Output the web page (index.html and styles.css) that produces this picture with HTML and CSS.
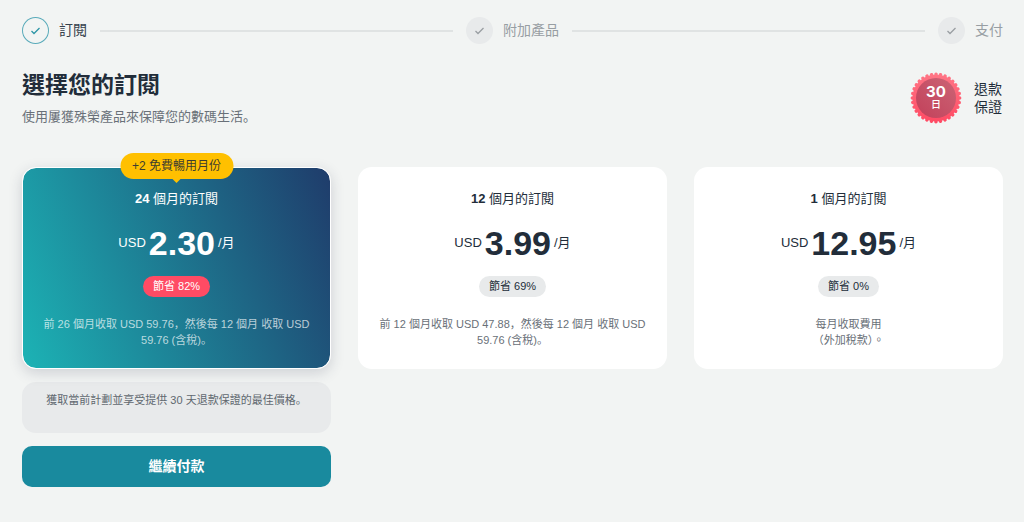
FILE: index.html
```html
<!DOCTYPE html>
<html lang="zh-Hant">
<head>
<meta charset="utf-8">
<meta name="viewport" content="width=device-width, initial-scale=1">
<title>選擇您的訂閱</title>
<link rel="stylesheet" href="styles.css">
</head>
<body>
<main class="page">
  <ol class="steps">
    <li class="step step-current">
      <span class="step-icon"><svg viewBox="0 0 27 27" aria-hidden="true"><path d="M9.5 14l2.5 2.5 5.5-5.5"/></svg></span>
      <span>訂閱</span>
    </li>
    <li class="step-line" aria-hidden="true"></li>
    <li class="step">
      <span class="step-icon"><svg viewBox="0 0 27 27" aria-hidden="true"><path d="M9.5 14l2.5 2.5 5.5-5.5"/></svg></span>
      <span>附加產品</span>
    </li>
    <li class="step-line" aria-hidden="true"></li>
    <li class="step">
      <span class="step-icon"><svg viewBox="0 0 27 27" aria-hidden="true"><path d="M9.5 14l2.5 2.5 5.5-5.5"/></svg></span>
      <span>支付</span>
    </li>
  </ol>

  <header class="intro">
    <div>
      <h1 class="title">選擇您的訂閱</h1>
      <p class="subtitle" lang="zh-Hans">使用屢獲殊榮產品來保障您的數碼生活。</p>
    </div>
    <div class="guarantee">
      <div class="seal">
        <svg class="seal-shape" viewBox="0 0 52 52" aria-hidden="true">
          <defs>
            <linearGradient id="rim" x1="0" y1="0" x2="0" y2="1"><stop offset="0" stop-color="#ff7585"/><stop offset="1" stop-color="#ff4b64"/></linearGradient>
            <linearGradient id="core" x1="1" y1="0" x2="0" y2="1"><stop offset="0" stop-color="#cb6475"/><stop offset="1" stop-color="#c2405a"/></linearGradient>
          </defs>
          <circle cx="26" cy="26" r="23.6" fill="url(#rim)"/>
          <circle cx="26" cy="26" r="23.7" fill="none" stroke="url(#rim)" stroke-width="3.4" stroke-linecap="round" pathLength="128" stroke-dasharray="0.1 3.9"/>
          <circle cx="26" cy="26" r="20" fill="url(#core)"/>
        </svg>
        <div class="seal-text"><strong class="seal-number">30</strong><span>日</span></div>
      </div>
      <p class="guarantee-text">退款<br>保證</p>
    </div>
  </header>

  <section class="plans">
    <div class="plan-column">
      <article class="plan plan-selected">
        <span class="bonus">+2 免費暢用月份</span>
        <h2 class="plan-title"><b>24</b> 個月的訂閱</h2>
        <p class="price"><span>USD</span><strong class="amount">2.30</strong><span>/月</span></p>
        <span class="saving">節省 82%</span>
        <p class="terms" lang="zh-Hans">前 26 個月收取 USD 59.76，然後每 12 個月 收取 USD 59.76 (含稅)。</p>
      </article>
      <p class="note" lang="zh-Hans">獲取當前計劃並享受提供 30 天退款保證的最佳價格。</p>
      <button class="pay" type="button">繼續付款</button>
    </div>
    <div class="plan-column">
      <article class="plan">
        <h2 class="plan-title"><b>12</b> 個月的訂閱</h2>
        <p class="price"><span>USD</span><strong class="amount">3.99</strong><span>/月</span></p>
        <span class="saving">節省 69%</span>
        <p class="terms" lang="zh-Hans">前 12 個月收取 USD 47.88，然後每 12 個月 收取 USD 59.76 (含稅)。</p>
      </article>
    </div>
    <div class="plan-column">
      <article class="plan">
        <h2 class="plan-title"><b>1</b> 個月的訂閱</h2>
        <p class="price"><span>USD</span><strong class="amount">12.95</strong><span>/月</span></p>
        <span class="saving">節省 0%</span>
        <p class="terms">每月收取費用<br>（外加稅款）。</p>
      </article>
    </div>
  </section>
</main>
</body>
</html>
```
FILE: styles.css
```css
* {
  box-sizing: border-box;
}

body {
  margin: 0;
  background: #f2f4f3;
  color: #222d3a;
  font-family: "Liberation Sans", "Noto Sans CJK TC", sans-serif;
  font-size: 13px;
}

:lang(zh-Hans) {
  font-family: "Liberation Sans", "Noto Sans CJK SC", sans-serif;
}

h1, h2, p, ol {
  margin: 0;
  padding: 0;
}

.page {
  padding: 17px 21px 35px 22px;
}

.steps {
  display: flex;
  align-items: center;
  gap: 13px;
  list-style: none;
}

.step {
  display: flex;
  align-items: center;
  gap: 10px;
  color: #989ea3;
  font-size: 14px;
  line-height: 27px;
}

.step-current {
  color: #36414c;
}

.step-icon {
  display: flex;
  width: 27px;
  height: 27px;
  border-radius: 50%;
  background: #e8eaeb;
}

.step-icon svg {
  width: 27px;
  height: 27px;
  fill: none;
  stroke: #999ea2;
  stroke-width: 1.3;
}

.step-current .step-icon {
  background: none;
  box-shadow: inset 0 0 0 1px #5aabba;
}

.step-current .step-icon svg {
  stroke: #2c95a5;
}

.step-line {
  flex: 1;
  height: 2px;
  background: #e0e3e3;
}

.intro {
  display: flex;
  justify-content: space-between;
  align-items: center;
  padding-top: 24px;
}

.title {
  font-size: 23px;
  line-height: 34px;
  font-weight: 700;
}

.subtitle {
  padding-top: 5px;
  padding-bottom: 3px;
  color: #697078;
  font-size: 13px;
  line-height: 20px;
}

.guarantee {
  display: flex;
  align-items: center;
  gap: 12px;
  padding-right: 1px;
  padding-bottom: 3px;
}

.seal {
  display: grid;
  place-items: center;
}

.seal-shape,
.seal-text {
  grid-area: 1 / 1;
}

.seal-shape {
  width: 52px;
  height: 52px;
}

.seal-text {
  display: flex;
  flex-direction: column;
  align-items: center;
  color: #fff;
  font-size: 10px;
  line-height: 12px;
  font-weight: 500;
}

.seal-number {
  font-family: Inter, sans-serif;
  font-size: 15px;
  line-height: 15px;
}

.guarantee-text {
  font-size: 14px;
  line-height: 18px;
}

.plans {
  display: grid;
  grid-template-columns: repeat(3, 1fr);
  gap: 27px;
  padding-top: 37px;
}

.plan-column {
  display: flex;
  flex-direction: column;
  gap: 13px;
}

.plan {
  position: relative;
  display: flex;
  flex-direction: column;
  align-items: center;
  padding: 22px 18px 21px;
  border-radius: 14px;
  background: #fff;
  text-align: center;
}

.plan-selected {
  background: linear-gradient(68deg, #1cb3b5 0%, #1f3c6b 100%) padding-box;
  color: #fff;
  border: 1px solid #fff;
  padding: 21px 17px 20px;
  box-shadow: 0 4px 14px rgba(40, 45, 70, 0.18);
}

.bonus {
  position: absolute;
  top: -15px;
  left: 50%;
  transform: translateX(-50%);
  padding: 0 12px;
  border-radius: 13px;
  background: #ffc000;
  color: #3d3d30;
  font-size: 12px;
  line-height: 26px;
  white-space: nowrap;
}

.bonus::after {
  content: "";
  position: absolute;
  top: 100%;
  left: 50%;
  margin-left: -4px;
  border: 4px solid transparent;
  border-bottom: 0;
  border-top-color: #ffc000;
}

.plan-title {
  font-size: 13px;
  line-height: 20px;
  font-weight: 400;
}

.plan-title b {
  font-weight: 700;
}

.price {
  display: flex;
  align-items: center;
  gap: 3px;
  padding-top: 14px;
  font-size: 13px;
  line-height: 40px;
}

.amount {
  font-size: 34px;
  font-weight: 700;
}

.saving {
  margin-top: 13px;
  padding: 0 10px;
  border-radius: 11px;
  background: #e8eaeb;
  font-size: 11px;
  line-height: 21px;
}

.plan-selected .saving {
  background: #ff4b64;
}

.terms {
  padding-top: 19px;
  color: #697078;
  font-size: 11px;
  line-height: 16px;
}

.plan-selected .terms {
  color: rgba(255, 255, 255, 0.7);
}

.note {
  min-height: 51px;
  padding: 10px 20px;
  border-radius: 14px;
  background: #e8eaeb;
  color: #60686f;
  font-size: 11px;
  line-height: 16px;
  text-align: center;
}

.pay {
  padding: 0 20px;
  border: 0;
  border-radius: 10px;
  background: #198a9e;
  color: #fff;
  font-family: inherit;
  font-size: 14px;
  line-height: 41px;
  font-weight: 700;
}
```
